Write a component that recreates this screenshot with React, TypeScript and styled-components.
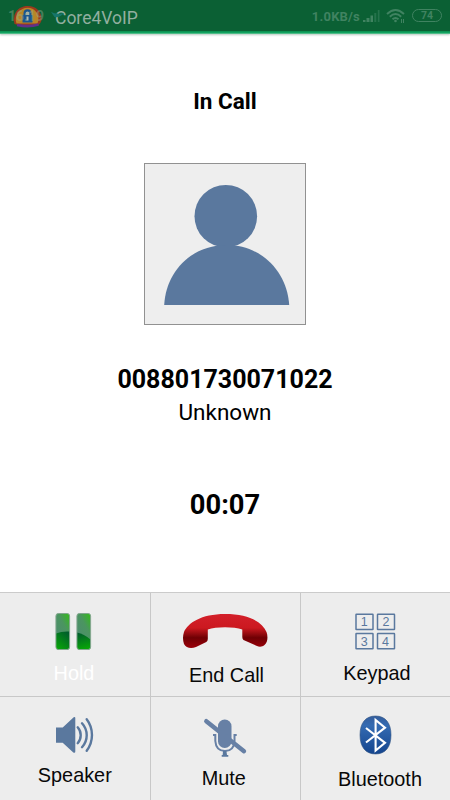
import React from "react";
import styled, { createGlobalStyle } from "styled-components";

const GlobalStyle = createGlobalStyle`
  * { box-sizing: border-box; }
  body { margin: 0; background: #fff; overflow: hidden; }
`;

const Screen = styled.div`
  width: 450px;
  height: 800px;
  display: flex;
  flex-direction: column;
  background: #fff;
  color: #000;
  font-family: Roboto, "Liberation Sans", sans-serif;
`;

const StatusBar = styled.header`
  position: relative;
  flex: none;
  height: 34px;
  display: flex;
  align-items: center;
  justify-content: space-between;
  padding: 0 8px 3px;
  background: linear-gradient(#0b6034 0 30.5px, #0b8a4b 31px, #12a260 32.5px, #6dc89b 34px);
  box-shadow: 0 1px 2px #b9c8c0;
`;

const Clock = styled.span`
  position: relative;
  z-index: 1;
  width: 47px;
  color: rgba(150, 175, 150, 0.42);
  font-size: 14px;
  font-weight: 700;
  line-height: 16px;
`;

const AppBadge = styled.svg`
  position: absolute;
  left: 0;
  top: 0;
`;

const AppName = styled.h1`
  margin: 4px 0 0;
  flex: 1;
  color: #92afa0;
  font-size: 17.5px;
  font-weight: 400;
  line-height: 24px;
`;

const Indicators = styled.div`
  display: flex;
  align-items: center;
  color: #408361;
`;

const Speed = styled.span`
  font-size: 13px;
  font-weight: 700;
  line-height: 16px;
  letter-spacing: 0.2px;
  margin: 2px 3px 0 0;
`;

const Wifi = styled.svg`
  margin-left: 6px;
`;

const Battery = styled.span`
  width: 30px;
  height: 13px;
  margin-left: 6px;
  display: flex;
  align-items: center;
  justify-content: center;
  border: 1px solid #408361;
  border-radius: 7px;
  font-size: 10.5px;
  font-weight: 700;
`;

const CallInfo = styled.main`
  flex: 1;
  display: flex;
  flex-direction: column;
  align-items: center;
`;

const CallState = styled.h2`
  margin: 52px 0 47px;
  font-size: 22.5px;
  line-height: 30px;
  font-weight: 700;
`;

const Avatar = styled.div`
  width: 162px;
  height: 162px;
  background: #eee;
  border: 1px solid #919191;
`;

const PhoneNumber = styled.p`
  margin: 40px 0 0;
  font-size: 25px;
  line-height: 30px;
  font-weight: 700;
`;

const ContactName = styled.p`
  margin: 2px 0 0;
  font-size: 22.5px;
  line-height: 30px;
`;

const Timer = styled.p`
  margin: 60px 0 0;
  font-size: 27.3px;
  line-height: 36px;
  font-weight: 700;
`;

const Controls = styled.nav`
  flex: none;
  display: grid;
  grid-template-columns: 150px 150px 150px;
  grid-template-rows: 104px 104px;
  background: #ededed;
  border-top: 1px solid #cbcbcb;
  height: 208px;
`;

const Control = styled.button<{ $first?: boolean; $lower?: boolean }>`
  display: flex;
  flex-direction: column;
  align-items: center;
  padding: 0;
  margin: 0;
  border: 0;
  border-bottom: ${(p) => (p.$lower ? "0" : "1px solid #c8c8c8")};
  border-left: ${(p) => (p.$first ? "0" : "1px solid #c8c8c8")};
  background: #ededed;
`;

const Picture = styled.svg`
  flex: none;
  display: block;
`;

const Label = styled.span<{ $x: number; $y: number; $faded?: boolean }>`
  font-family: "Liberation Sans", Arial, sans-serif;
  font-size: 19.85px;
  line-height: 24px;
  margin-top: ${(p) => p.$y}px;
  padding-left: ${(p) => Math.max(p.$x, 0) * 2}px;
  padding-right: ${(p) => Math.max(-p.$x, 0) * 2}px;
  color: ${(p) => (p.$faded ? "#fff" : "#080808")};
`;

const blue = "#5a789e";

const HoldIcon = () => (
  <>
    <defs>
      <linearGradient id="gloss" x1="1" y1="0" x2="0.3" y2="1">
        <stop offset="0" stopColor="#32bd16" />
        <stop offset=".4" stopColor="#4b9560" />
        <stop offset="1" stopColor="#4c8b72" />
      </linearGradient>
      <linearGradient id="deep" x1=".8" y1="0" x2="0.2" y2="1">
        <stop offset="0" stopColor="#005c2c" />
        <stop offset="1" stopColor="#08a508" />
      </linearGradient>
      <linearGradient id="deepRight" x1="0.2" y1="0" x2=".4" y2="1">
        <stop offset="0" stopColor="#005c2c" />
        <stop offset="1" stopColor="#08a508" />
      </linearGradient>
    </defs>
    <rect x="56" y="20.5" width="13.5" height="36" rx="2" fill="url(#gloss)" />
    <path d="M56 40.5Q62 38 69.5 38.5V54.5Q69.5 56.5 67.5 56.5H58Q56 56.5 56 54.5Z" fill="url(#deep)" />
    <rect x="77" y="20.5" width="13.5" height="36" rx="2" fill="url(#gloss)" />
    <path d="M77 39.5Q84 41 90.5 46.5V54.5Q90.5 56.5 88.5 56.5H79Q77 56.5 77 54.5Z" fill="url(#deepRight)" />
    <g fill="none" stroke="#83a68e" strokeWidth="1">
      <rect x="55.9" y="20.5" width="13.7" height="36" rx="2.5" />
      <rect x="76.9" y="20.5" width="13.7" height="36" rx="2.5" />
    </g>
  </>
);

const EndIcon = () => (
  <>
    <defs>
      <linearGradient id="handset" x1="0" y1="21" x2="0" y2="54" gradientUnits="userSpaceOnUse">
        <stop offset="0" stopColor="#d3202a" />
        <stop offset=".42" stopColor="#cc1920" />
        <stop offset=".72" stopColor="#6f0004" />
        <stop offset="1" stopColor="#970009" />
      </linearGradient>
    </defs>
    <path
      d="M34 39C38 30 51 21 75 21C99 21 112 29 116.5 39C118 43 118 49 114.5 52C112.5 54 109 54 107 53L93.5 47Q92.3 46 92.3 44V36.5C84 33.5 66 33.5 57.8 36.5V46Q57.8 48 56.3 49L46 54C41 56 36 55 34 51Q32 45 34 39Z"
      fill="url(#handset)"
    />
  </>
);

const KeypadIcon = () => (
  <>
    <g fill="none" stroke={blue} strokeWidth="1.5">
      <rect x="56" y="21.3" width="17" height="15.3" rx=".4" />
      <rect x="77.5" y="21.3" width="17" height="15.3" rx=".4" />
      <rect x="56" y="40.5" width="17" height="15.3" rx=".4" />
      <rect x="77.5" y="40.5" width="17" height="15.3" rx=".4" />
    </g>
    <g fill={blue} fontFamily="Liberation Sans" fontSize="12.5" textAnchor="middle">
      <text x="64.2" y="33.3">1</text>
      <text x="86" y="33.3">2</text>
      <text x="64.2" y="52.5">3</text>
      <text x="85.5" y="52.5">4</text>
    </g>
  </>
);

const SpeakerIcon = () => (
  <>
    <path d="M56 30.5H62.7L73.7 20.3Q75.3 19.5 75.3 21V54.5Q75.3 56.5 73.3 55.5L62.7 45.7H56Z" fill={blue} />
    <g fill="none" stroke={blue} strokeWidth="2.4" strokeLinecap="round">
      <path d="M77.7 30.3A12 12 0 0 1 77.7 46.2" />
      <path d="M82 26.3A17.5 17.5 0 0 1 82 50.2" />
      <path d="M86.7 22.3A26 26 0 0 1 86.7 53.7" />
    </g>
  </>
);

const MuteIcon = () => (
  <>
    <rect x="68" y="22.5" width="13.5" height="28.5" rx="6.7" fill="#6780a5" />
    <path d="M63 37.9H65.3V44Q66 54 75 54Q84 54 84.5 44V37.9H86.7" fill="none" stroke="#6780a5" strokeWidth="2" />
    <path d="M73 54H76.4L77 58H78.3V59.7H71.7V58H72.7Z" fill={blue} />
    <path d="M56.3 24.2L94 54.2" stroke="#6780a5" strokeWidth="4.4" strokeLinecap="round" />
  </>
);

const BluetoothIcon = () => (
  <>
    <defs>
      <linearGradient id="badge" x2="0" y2="1">
        <stop offset="0" stopColor="#345d9b" />
        <stop offset=".25" stopColor="#346bb2" />
        <stop offset="1" stopColor="#14458e" />
      </linearGradient>
    </defs>
    <path
      d="M75.5 19C85.5 19 91 26 91 38C91 50 85.5 57 75.5 57C65.500 57 60 50 60 38C60 26 65.500 19 75.500 19Z"
      fill="url(#badge)"
      stroke="#315483"
      strokeWidth=".6"
    />
    <path d="M66 31L85 45.800L75.600 53.500V23L85 30.700L66 45.500" fill="none" stroke="#fff" strokeWidth="2.100" />
  </>
);

interface Action {
  name: string;
  icon: React.FC;
  x: number;
  y: number;
}

const actions: Action[] = [
  { name: "Hold", icon: HoldIcon, x: -1, y: 8 },
  { name: "End Call", icon: EndIcon, x: 1, y: 10 },
  { name: "Keypad", icon: KeypadIcon, x: 1.5, y: 8 },
  { name: "Speaker", icon: SpeakerIcon, x: -0.2, y: 6 },
  { name: "Mute", icon: MuteIcon, x: -1.8, y: 9 },
  { name: "Bluetooth", icon: BluetoothIcon, x: 4.5, y: 10 },
];

export default function App() {
  return (
    <>
      <GlobalStyle />
      <Screen>
        <StatusBar>
          <AppBadge width="70" height="31" viewBox="0 0 70 31">
            <path d="M14.500 24Q13 20 14.500 15C17 8.500 22 6 28 6C36 6 41 11 41.500 18Q42 22 38.500 25Q27 28.500 14.500 24Z" fill="#9a391d" />
            <path d="M16.500 23.500Q14.500 18 18 12.500C23 6 33 6 37 13Q39.500 18 37.500 23.500Z" fill="#b98527" />
            <path d="M17 25Q29 27.500 38.500 24.500" stroke="#633088" strokeWidth="2.800" fill="none" />
            <path d="M24.600 16V13Q24.600 10.300 27.500 10.300Q30.400 10.300 30.400 13V16" fill="#a9b3a4" stroke="#1b5690" strokeWidth="2.200" />
            <rect x="22.500" y="15" width="10" height="7.500" rx=".6" fill="#1b5690" />
            <path d="M27.500 16.500V20.500" stroke="#b5bdb0" strokeWidth="2" />
            <path d="M51 12Q57 15 64 13Q60 18 54.500 17Z" fill="#16756a" />
          </AppBadge>
          <Clock>16:19</Clock>
          <AppName>Core4VoIP</AppName>
          <Indicators>
            <Speed>1.0KB/s</Speed>
            <svg width="17" height="12" viewBox="0 0 17 12">
              <path d="M0 12V10H2.500V12ZM3.500 12V8H6.500V12ZM7.500 12V5.500H10V12Z" fill="#408361" />
              <path d="M11.300 12V3H13.300V12ZM14.800 12V0H16.500V12Z" fill="#25734c" />
            </svg>
            <Wifi width="20" height="16" viewBox="0 0 20 16">
              <g fill="none" stroke="#408361" strokeWidth="1.900">
                <path d="M1 6Q9.500 -2 18 6" />
                <path d="M3.800 8.700Q9.500 3.500 15.200 8.700" />
                <path d="M6.500 11.300Q9.500 8.600 12.500 11.300" />
              </g>
              <circle cx="9.500" cy="13" r="1.300" fill="#408361" />
              <path d="M15.500 11V15M17.500 11V15" stroke="#408361" />
            </Wifi>
            <Battery>74</Battery>
          </Indicators>
        </StatusBar>
        <CallInfo>
          <CallState>In Call</CallState>
          <Avatar>
            <svg width="160" height="160" viewBox="145 164 160 160">
              <circle cx="225.800" cy="216.200" r="31.300" fill={blue} />
              <path d="M164.200 305C166 271 192 245 226.500 245C261 245 287 271 289.200 305Z" fill={blue} />
            </svg>
          </Avatar>
          <PhoneNumber>008801730071022</PhoneNumber>
          <ContactName>Unknown</ContactName>
          <Timer>00:07</Timer>
        </CallInfo>
        <Controls>
          {actions.map(({ name, icon: Icon, x, y }, i) => {
            const first = i % 3 === 0;
            return (
              <Control key={name} $first={first} $lower={i > 2}>
                <Picture
                  width={first ? 150 : 149}
                  height="60"
                  viewBox={first ? "0 0 150 60" : "1 0 149 60"}
                >
                  <Icon />
                </Picture>
                <Label $x={x} $y={y} $faded={name === "Hold"}>
                  {name}
                </Label>
              </Control>
            );
          })}
        </Controls>
      </Screen>
    </>
  );
}
